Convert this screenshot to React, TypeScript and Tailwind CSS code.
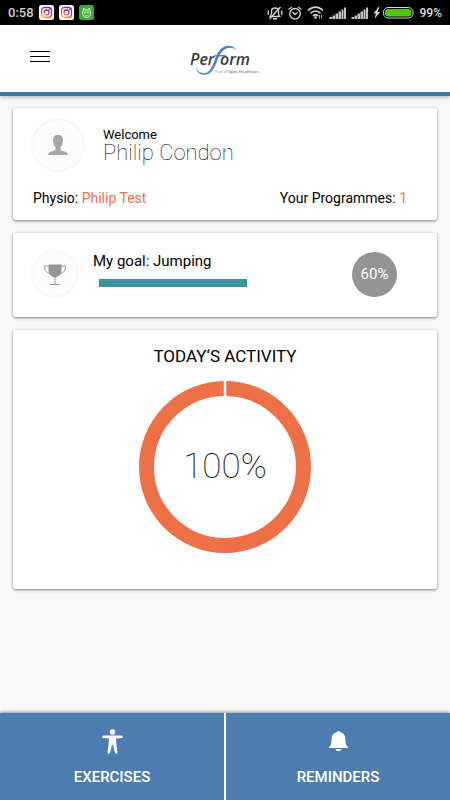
import type { ReactNode } from "react";

const goal = { title: "Jumping", percent: 60 };

function InstagramIcon() {
  return (
    <svg viewBox="0 0 30 30" className="size-[15px]" aria-hidden="true">
      <defs>
        <linearGradient id="insta" x1="0.2" y1="1" x2="0.7" y2="0">
          <stop offset="0" stopColor="#fbb03b" />
          <stop offset="0.45" stopColor="#ee2a5b" />
          <stop offset="1" stopColor="#7a2bd0" />
        </linearGradient>
      </defs>
      <rect width="30" height="30" rx="5" fill="#fff" />
      <rect x="5" y="5" width="20" height="20" rx="6" fill="none" stroke="url(#insta)" strokeWidth="2.6" />
      <circle cx="15" cy="15" r="5" fill="none" stroke="url(#insta)" strokeWidth="2.6" />
      <circle cx="21" cy="9" r="1.5" fill="#a52bc0" />
    </svg>
  );
}

function CatIcon() {
  return (
    <svg viewBox="0 0 30 30" className="size-[15px]" aria-hidden="true">
      <rect width="30" height="30" rx="5" fill="#3aa935" />
      <path
        d="M9 6l3 4h6l3-4 1 6c2 3 1 6 0 7 0 4-3 6-7 6s-7-2-7-6c-1-1-2-4 0-7z"
        fill="none"
        stroke="#e9f8e4"
        strokeWidth="2"
        strokeLinejoin="round"
      />
      <path d="M9 14h12M11 20c2 2 6 2 8 0" stroke="#e9f8e4" strokeWidth="1.6" fill="none" />
      <circle cx="12" cy="16" r="1.5" fill="#e9f8e4" />
      <circle cx="18" cy="16" r="1.5" fill="#e9f8e4" />
    </svg>
  );
}

function MutedBellIcon() {
  return (
    <svg viewBox="0 0 32 28" className="h-[14px] w-4" fill="none" stroke="#cfcfcf" strokeWidth="2.8" aria-hidden="true">
      <path d="M6 21c4-3 3-6 3-10 0-4 3-7 7-7s7 3 7 7c0 4-1 7 3 10z" strokeLinejoin="round" />
      <path d="M12 25.500h8M27 2L5 26M3 9c-1 3-1 6 0 9M29 9c1 3 1 6 0 9" />
    </svg>
  );
}

function AlarmIcon() {
  return (
    <svg viewBox="0 0 28 28" className="size-[14px]" fill="none" stroke="#cfcfcf" strokeWidth="2.8" aria-hidden="true">
      <circle cx="14" cy="15.500" r="10.500" />
      <path d="M9 12l5 5 5-4M1 7l7-5M27 7l-7-5" />
    </svg>
  );
}

function WifiIcon() {
  return (
    <svg viewBox="0 0 34 26" className="h-[13px] w-[17px]" fill="none" stroke="#d4d4d4" strokeWidth="3.4" aria-hidden="true">
      <path d="M2 9c9-9 21-9 30 0M7 14.500c6-6 14-6 20 0M12 20c3-3 7-3 10 0" />
      <circle cx="17" cy="23" r="2.6" fill="#d4d4d4" stroke="none" />
      <path d="M25 25v-7M29 18v7" strokeWidth="1.6" />
    </svg>
  );
}

function SignalIcon() {
  return (
    <svg viewBox="0 0 34 24" className="h-3 w-[17px]" fill="#c4c4c4" aria-hidden="true">
      <path d="M1 20h5v4H1zM7 17h5v7H7zM13 13h5v11h-5zM19 9h5v15h-5zM25 5h4v19h-4zM30 1h4v23h-4z" />
    </svg>
  );
}

function BatteryIcon() {
  return (
    <svg viewBox="0 0 82 24" className="h-3 w-[41px]" aria-hidden="true">
      <path d="M11 0L1 13h5l-3 11L14 10H9l4-10z" fill="#d4d4d4" />
      <rect x="21" y="1" width="59" height="21" rx="9" fill="#000" stroke="#d4d4d4" strokeWidth="2" />
      <rect x="24" y="4" width="53" height="15" rx="6" fill="#4cc80a" />
    </svg>
  );
}

function StatusBar() {
  return (
    <div className="flex h-[25px] items-center justify-between bg-black px-2 text-[13px] font-medium text-[#d0d0d0]">
      <div className="flex items-center gap-[5px]">
        <span>0:58</span>
        <InstagramIcon />
        <InstagramIcon />
        <CatIcon />
      </div>
      <div className="flex items-center gap-[5px]">
        <MutedBellIcon />
        <AlarmIcon />
        <WifiIcon />
        <SignalIcon />
        <SignalIcon />
        <BatteryIcon />
        <span className="text-xs font-semibold">99%</span>
      </div>
    </div>
  );
}

function Logo() {
  return (
    <svg
      viewBox="0 0 72 34"
      className="h-[34px] w-[72px] font-['Open_Sans',sans-serif]"
      role="img"
      aria-label="Perform, part of Spire Healthcare"
    >
      <g fontSize="16" fontStyle="italic" fontWeight="600" fill="#3a3a3c">
        <text x="1" y="23">
          Per
        </text>
        <text x="31" y="23">
          orm
        </text>
      </g>
      <path
        d="M7 26C10 32 17 33 21 28C25 23 26 14 30 9C34 3 44 1 48 9C44 4 36 5 32 11C28 17 27 25 22 30C17 35 8 33 7 26Z"
        fill="#4a80d0"
      />
      <path d="M26 13h11l-1 1.500H25z" fill="#4a80d0" />
      <text x="26" y="31" fontSize="4" fill="#8a8a8a">
        Part of <tspan fill="#3a3a3c">Spire Healthcare</tspan>
      </text>
    </svg>
  );
}

function Header() {
  return (
    <header className="grid h-[71px] grid-cols-[1fr_auto_1fr] items-center border-b-4 border-[#3d78b2] bg-white px-[30px] shadow-[0_2px_3px_rgba(0,0,0,0.2)]">
      <button type="button" aria-label="Menu" className="flex w-5 flex-col gap-1 pb-1">
        <span className="h-px w-full bg-black" />
        <span className="h-px w-full bg-black" />
        <span className="h-px w-full bg-black" />
      </button>
      <Logo />
    </header>
  );
}

function Card({ children, className }: { children: ReactNode; className: string }) {
  return (
    <section className={`rounded-[3px] bg-white px-5 shadow-[0_1px_3px_rgba(0,0,0,0.5)] ${className}`}>
      {children}
    </section>
  );
}

function WelcomeCard() {
  return (
    <Card className="pt-3 pb-[10px]">
      <div className="flex items-center gap-5">
        <div className="flex size-[50px] items-center justify-center rounded-full bg-[#fcfcfc] shadow-[0_0_4px_rgba(0,0,0,0.1)]">
          <svg viewBox="0 0 40 40" className="size-5" fill="#a6a6a6" aria-hidden="true">
            <path d="M20 0c7 0 10 4 10 10 0 7-2 11-5 14v5c1 4 15 3 15 11H0c0-8 14-7 15-11v-5c-3-3-5-7-5-14 0-6 3-10 10-10z" />
          </svg>
        </div>
        <div>
          <p className="text-[13px] leading-4">Welcome</p>
          <h1 className="text-[22px] leading-5 font-thin">Philip Condon</h1>
        </div>
      </div>
      <div className="flex justify-between pt-4 pr-[10px] text-sm leading-6">
        <p>
          Physio: <span className="text-[#ed7047]">Philip Test</span>
        </p>
        <p>
          Your Programmes: <span className="text-[#ed7047]">1</span>
        </p>
      </div>
    </Card>
  );
}

function GoalCard() {
  return (
    <Card className="flex items-start pt-[19px] pb-5">
      <div className="flex size-11 shrink-0 items-center justify-center rounded-full bg-[#fcfcfc] shadow-[0_0_4px_rgba(0,0,0,0.1)]">
        <svg viewBox="0 0 44 42" className="h-[21px] w-[22px]" fill="none" stroke="#999" strokeWidth="2" aria-hidden="true">
          <path d="M9 1h26v11c0 9-6 14-13 15C15 26 9 21 9 12z" fill="#969696" stroke="none" />
          <path d="M9 4H1c0 9 4 14 11 15M35 4h8c0 9-4 14-11 15M22 26v15M12 41h20" />
        </svg>
      </div>
      <div className="flex-1 pl-4">
        <h2 id="goal" className="text-[15px] leading-[18px]">
          My goal: {goal.title}
        </h2>
        <div
          role="progressbar"
          aria-labelledby="goal"
          aria-valuenow={goal.percent}
          className="mx-[6px] mt-[9px] h-2"
        >
          <div className="h-full bg-[#3a9499]" style={{ width: `${goal.percent}%` }} />
        </div>
      </div>
      <div className="mr-5 flex size-[45px] items-center justify-center rounded-full bg-[#949494] text-[15px] text-white">
        {goal.percent}%
      </div>
    </Card>
  );
}

function ActivityCard() {
  return (
    <Card className="flex flex-col items-center pt-4 pb-9">
      <h2 className="text-[17px] leading-5">TODAY‘S ACTIVITY</h2>
      <div className="mt-[15px] grid place-items-center">
        <svg viewBox="0 0 172 172" className="col-start-1 row-start-1 size-[172px]" aria-hidden="true">
          <circle cx="86" cy="86" r="78.500" fill="none" stroke="#ed7047" strokeWidth="15" />
          <path d="M86 0v17" stroke="#fff" strokeWidth="2.500" />
        </svg>
        <p className="col-start-1 row-start-1 text-[35px] leading-10 font-thin">100%</p>
      </div>
    </Card>
  );
}

function NavLink({ href, label, children }: { href: string; label: string; children: ReactNode }) {
  return (
    <a href={href} className="flex flex-1 flex-col items-center bg-[#4d7db0] pt-4 pb-[13px] text-[15px] leading-5 font-medium text-white">
      {children}
      <span className="mt-[13px]">{label}</span>
    </a>
  );
}

function BottomNav() {
  return (
    <nav className="flex gap-[2px] shadow-[0_-1px_3px_rgba(0,0,0,0.4)]">
      <NavLink href="#exercises" label="EXERCISES">
        <svg viewBox="0 0 42 50" className="h-[25px] w-[21px]" fill="#fff" aria-hidden="true">
          <circle cx="21" cy="6" r="5.500" />
          <path d="M2 13h38c2 0 2 5 0 5l-12 1 1 13 2 15c0 3-4 3-5 1l-4-16h-2l-4 16c-1 2-5 2-5-1l2-15 1-13-12-1c-2 0-2-5 0-5z" />
        </svg>
      </NavLink>
      <NavLink href="#reminders" label="REMINDERS">
        <svg viewBox="0 0 38 50" className="h-[25px] w-[19px]" fill="#fff" aria-hidden="true">
          <path d="M19 4c2 0 3 1 3 2 7 2 11 7 11 14 0 9 0 12 5 16v2H0v-2c5-4 5-7 5-16 0-7 4-12 11-14 0-1 1-2 3-2zM13 40h12c-1 6-11 6-12 0z" />
        </svg>
      </NavLink>
    </nav>
  );
}

export default function App() {
  return (
    <div className="flex min-h-screen flex-col bg-[#f8f8f8] font-['Roboto',sans-serif] text-black">
      <StatusBar />
      <Header />
      <main className="flex flex-1 flex-col gap-[13px] px-[13px] py-3">
        <WelcomeCard />
        <GoalCard />
        <ActivityCard />
      </main>
      <BottomNav />
    </div>
  );
}
